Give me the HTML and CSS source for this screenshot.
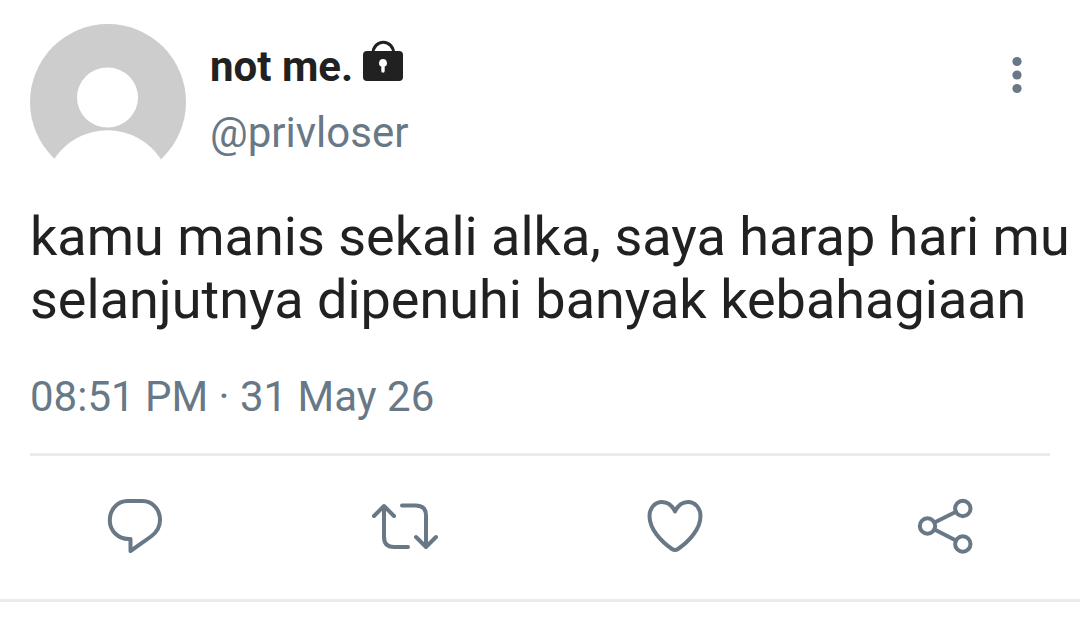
FILE: index.html
```html
<!DOCTYPE html>
<html lang="id">
<head>
    <meta charset="UTF-8">
    <meta name="viewport" content="width=device-width, initial-scale=1.0">
    <title>not me. (@privloser)</title>
    <link rel="stylesheet" href="styles.css">
</head>
<body>
    <article class="tweet">
        <header class="tweet-header">
            <svg class="avatar" viewBox="0 0 156 156" aria-hidden="true">
                <circle cx="78" cy="78" r="78" fill="#cdcdcd"/>
                <ellipse cx="77.5" cy="73.5" rx="30.5" ry="30"  fill="#fff"/>
                <path d="M24.5 134.500A64 64 0 0 1 130.500 134.500V156H24.500z" fill="#fff"/>
            </svg>

            <div class="author">
                <div class="name">
                    not me.
                    <svg class="lock" viewBox="0 0 42 42" aria-hidden="true">
                        <path d="M11 13a10.300 10.800 0 0 1 20.600 0" fill="none" stroke="#212121" stroke-width="3"/>
                        <rect x="1" y="11" width="40" height="30" rx="4" fill="#212121"/>
                        <path d="M21 19a4 4 0 0 0-1.700 7.600V31a1.700 1.700 0 0 0 3.400 0v-4.400a4 4 0 0 0-1.700-7.600z" fill="#fff"/>
                    </svg>
                </div>
                <a class="handle" href="#">@privloser</a>
            </div>

            <button class="more" type="button" aria-label="More">
                <svg viewBox="0 0 36 42" aria-hidden="true">
                    <circle cx="18" cy="7.5" r="4.6"/>
                    <circle cx="18" cy="21" r="4.6"/>
                    <circle cx="18" cy="34.5" r="4.6"/>
                </svg>
            </button>
        </header>

        <p class="tweet-text">kamu manis sekali alka, saya harap hari mu<br>selanjutnya dipenuhi banyak kebahagiaan</p>

        <time class="date">08:51 PM · 31 May 26</time>

        <div class="actions">
            <button type="button" aria-label="Reply">
                <svg viewBox="0 0 90 90" aria-hidden="true">
                    <path d="M37.500 21H52.500C62.500 21 70 29.500 70 40C70 46.500 66.500 52.500 61 56.500L40.500 71V59H38.500C28 59 19.800 50.500 19.800 40.500C19.800 29.500 27.500 21 37.500 21z"/>
                </svg>
            </button>
            <button type="button" aria-label="Retweet">
                <svg viewBox="0 0 90 90" aria-hidden="true">
                    <path d="M14 36L24 26L34 36M24 27V57Q24 67 34 67H48"/>
                    <path d="M42 25.500H56Q66 25.500 66 35.500V66M56 57L66 67L76 57"/>
                </svg>
            </button>
            <button type="button" aria-label="Like">
                <svg viewBox="0 0 90 90" aria-hidden="true">
                    <path d="M45 31.500C42 25 37 22 32 22C25 22 19.500 28 19.500 36C19.500 49 31 61.500 42 69Q45 71 48 69C59 61.500 70.500 49 70.500 36C70.500 28 65 22 58 22C53 22 48 25 45 31.500z"/>
                </svg>
            </button>
            <button type="button" aria-label="Share">
                <svg viewBox="0 0 90 90" aria-hidden="true">
                    <circle cx="27.5" cy="46" r="7.7"/>
                    <circle cx="62.8" cy="28.5" r="7.7"/>
                    <circle cx="62.8" cy="64" r="7.7"/>
                    <path d="M34.500 42.500L56 31.800M34.500 49.500L56 60.500"/>
                </svg>
            </button>
        </div>
    </article>
</body>
</html>
```

FILE: styles.css
```css
body {
    margin: 0;
    background: #fff;
    color: #212121;
    font-family: Roboto, sans-serif;
}

button {
    display: flex;
    justify-content: center;
    padding: 0;
    border: none;
    background: none;
    color: #687886;
    cursor: pointer;
}

.tweet {
    padding-top: 24px;
    border-bottom: 3px solid #ebebeb;
}

.tweet-header {
    display: flex;
    align-items: flex-start;
    gap: 24px;
    padding: 0 45px 0 30px;
}

.avatar {
    flex: none;
    width: 156px;
    height: 156px;
}

.author {
    flex: 1;
    padding-top: 10px;
    font-size: 42px;
    line-height: 66px;
}

.name {
    display: flex;
    align-items: center;
    gap: 9px;
    font-weight: bold;
}

.lock {
    width: 42px;
    height: 42px;
    margin-bottom: 12px;
}

.handle {
    display: block;
    color: #687886;
    text-decoration: none;
}

.more {
    margin-top: 30px;
}

.more svg {
    width: 36px;
    height: 42px;
    fill: currentColor;
}

.tweet-text {
    margin: 25px 0 42px;
    padding-left: 30px;
    font-size: 54px;
    line-height: 63px;
    white-space: nowrap;
}

.date {
    display: block;
    margin: 0 30px;
    padding-bottom: 32px;
    border-bottom: 3px solid #ebebeb;
    color: #687886;
    font-size: 42px;
    line-height: 48px;
}

.actions {
    display: grid;
    grid-template-columns: repeat(4, 1fr);
    padding: 24px 0 29px;
}

.actions svg {
    width: 90px;
    height: 90px;
    fill: none;
    stroke: currentColor;
    stroke-width: 4;
    stroke-linecap: round;
    stroke-linejoin: round;
}
```
